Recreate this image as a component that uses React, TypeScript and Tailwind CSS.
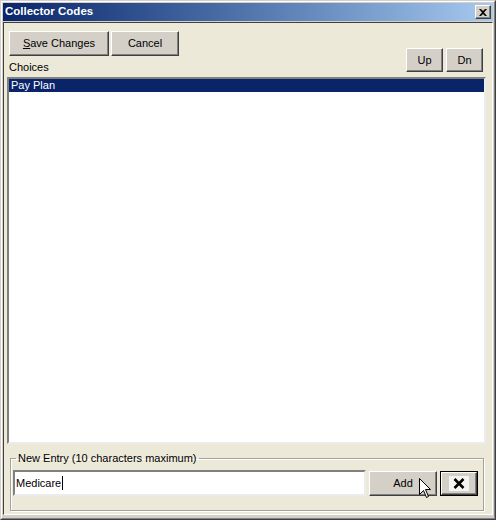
import React from "react";

const font = { fontFamily: '"Liberation Sans", Arial, sans-serif' };

function Btn({ className = "", children }: { className?: string; children: React.ReactNode }) {
  return (
    <div
      className={`flex items-center justify-center bg-[#d4d0c8] border border-t-white border-l-white border-r-[#404040] border-b-[#404040] shadow-[inset_-1px_-1px_0_#808080] text-[11px] text-black leading-none ${className}`}
    >
      {children}
    </div>
  );
}

export default function App() {
  return (
    <div className="w-[496px] h-[520px] bg-[#d4d0c8] border border-t-[#d4d0c8] border-l-[#d4d0c8] border-r-[#404040] border-b-[#404040]" style={font}>
      <div className="h-full border border-t-white border-l-white border-r-[#808080] border-b-[#808080] p-px flex flex-col">
        {/* Title bar */}
        <div className="h-[18px] flex items-center justify-between pl-[2px] pr-[2px] bg-gradient-to-r from-[#0a246a] to-[#a6caf0]">
          <span className="text-white font-bold text-[11.5px] leading-none">Collector Codes</span>
          <div className="w-[16px] h-[14px] flex items-center justify-center bg-[#d4d0c8] border border-t-white border-l-white border-r-[#404040] border-b-[#404040] shadow-[inset_-1px_-1px_0_#808080]">
            <svg width="8" height="7" viewBox="0 0 8 7">
              <path d="M0 0 L2 0 L4 2 L6 0 L8 0 L5 3.5 L8 7 L6 7 L4 5 L2 7 L0 7 L3 3.5 Z" fill="#000" />
            </svg>
          </div>
        </div>
        {/* Client */}
        <div className="mt-px mb-[2px] flex-1 flex flex-col bg-[#ece9d8] border border-t-[#404040] border-l-[#404040] border-r-[#ffffff] border-b-[#ffffff]">
          <div className="flex items-end justify-between pl-[5px] pr-[9px] pt-[8px]">
            <div className="flex flex-col">
              <div className="flex gap-[2px]">
                <Btn className="w-[100px] h-[25px]">
                  <span><span className="underline">S</span>ave Changes</span>
                </Btn>
                <Btn className="w-[68px] h-[25px]">Cancel</Btn>
              </div>
              <div className="mt-[4px] h-[14px] text-[11px] leading-[14px] text-black">Choices</div>
            </div>
            <div className="flex gap-[3px] mb-[2px]">
              <Btn className="w-[37px] h-[24px]">Up</Btn>
              <Btn className="w-[37px] h-[24px]">Dn</Btn>
            </div>
          </div>
          {/* List */}
          <div className="ml-[3px] mt-[3px] w-[479px] h-[367px] bg-white border-2 border-t-[#808080] border-l-[#808080] border-r-[#ececec] border-b-[#ececec]">
            <div className="h-[13px] bg-[#0a246a] text-white text-[11px] leading-[13px] pl-[2px]">Pay Plan</div>
          </div>
          {/* Group box */}
          <fieldset className="ml-[6px] mt-[8px] w-[474px] h-[59px] border border-[#a5a397] shadow-[inset_1px_1px_0_#fff,1px_1px_0_#fff] px-0 pb-0">
            <legend className="ml-[5px] px-[2px] text-[11px] leading-[13px] text-black">New Entry (10 characters maximum)</legend>
            <div className="flex items-start pl-[2px] pt-[5px] gap-[3px]">
              <div className="w-[353px] h-[26px] bg-white border-2 border-t-[#808080] border-l-[#808080] border-r-[#ececec] border-b-[#ececec] flex items-center pl-[1px]">
                <span className="text-[11px] leading-none text-black">Medicare</span>
                <span className="w-px h-[14px] bg-black ml-px" />
              </div>
              <div className="relative mt-px">
                <Btn className="w-[68px] h-[25px]">Add</Btn>
                <svg className="absolute left-[50px] top-[7px]" width="13" height="21" viewBox="0 0 13 21">
                  <path d="M0.5 0.5 L0.5 16.5 L4.5 12.5 L7.5 19.5 L9.5 18.5 L6.5 11.5 L11.5 11.5 Z" fill="#fff" stroke="#000" strokeWidth="1" strokeLinejoin="miter" />
                </svg>
              </div>
              <div className="mt-px w-[38px] h-[25px] border border-black bg-[#d4d0c8] flex">
                <div className="flex-1 flex items-center justify-center border border-t-white border-l-white border-r-[#404040] border-b-[#404040] shadow-[inset_-1px_-1px_0_#808080]">
                  <div className="w-[20px] h-[15px] bg-[#f4f4f2] flex items-center justify-center">
                    <svg width="12" height="11" viewBox="0 0 12 11">
                      <path d="M1.5 1 L10.5 10 M10.5 1 L1.5 10" stroke="#000" strokeWidth="2.6" />
                    </svg>
                  </div>
                </div>
              </div>
            </div>
          </fieldset>
        </div>
      </div>
    </div>
  );
}
